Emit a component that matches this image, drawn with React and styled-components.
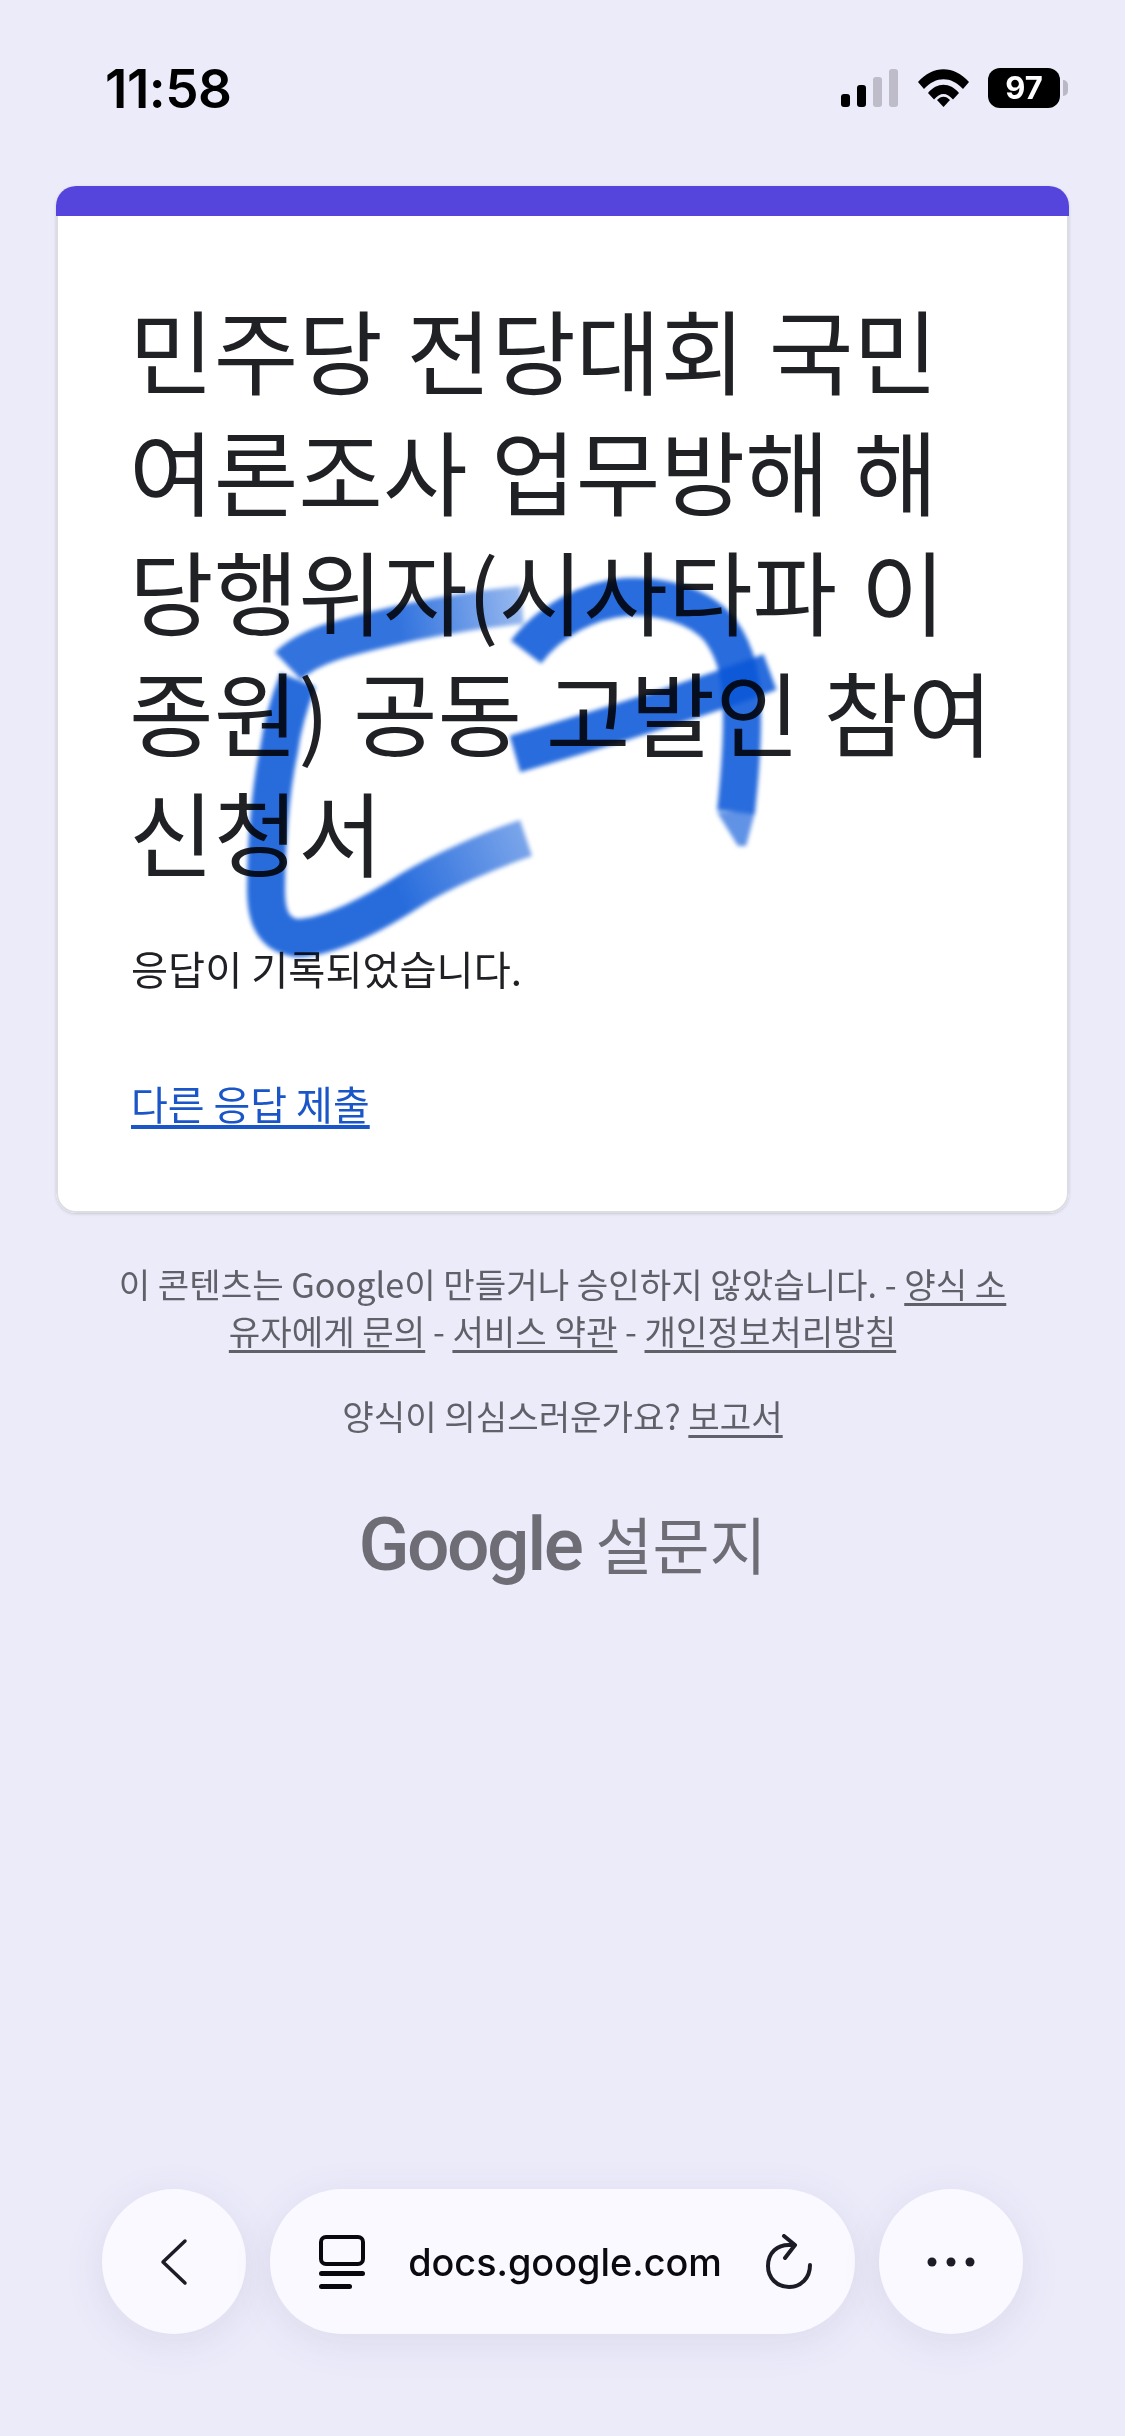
import React from "react";
import styled, { createGlobalStyle } from "styled-components";

const sans = `Inter, "Noto Sans CJK KR", sans-serif`;
const korean = `"Noto Sans CJK KR", Inter, sans-serif`;

const GlobalStyle = createGlobalStyle`
  html, body {
    margin: 0;
    padding: 0;
    background: #ecebfa;
  }
`;

const Page = styled.div`
  position: relative;
  width: 1125px;
  height: 2436px;
  overflow: hidden;
  display: flex;
  flex-direction: column;
  background: #ecebfa;
  font-family: ${korean};
`;

const StatusBar = styled.div`
  height: 186px;
  box-sizing: border-box;
  padding: 58px 65px 0 105px;
  display: flex;
  justify-content: space-between;
  align-items: flex-start;
`;

const Time = styled.div`
  font-family: ${sans};
  font-size: 53px;
  font-weight: 600;
  line-height: 62px;
  letter-spacing: -0.5px;
  color: #000;
`;

const StatusIcons = styled.div`
  display: flex;
  align-items: center;
  gap: 19px;
  margin-top: 10px;
`;

const Battery = styled.div`
  position: relative;
  width: 72px;
  height: 40px;
  border-radius: 12px;
  background: #000;
  color: #fff;
  font-family: ${sans};
  font-size: 31px;
  font-weight: 700;
  line-height: 40px;
  text-align: center;

  &::after {
    content: "";
    position: absolute;
    right: -8px;
    top: 12px;
    width: 5px;
    height: 16px;
    border-radius: 0 5px 5px 0;
    background: #b9b8c4;
  }
`;

const Card = styled.div`
  margin: 0 56px;
  width: 1013px;
  border-radius: 20px;
  background: #fff;
  box-shadow: 0 1px 3px rgba(60, 64, 67, 0.2);
  overflow: hidden;
`;

const CardAccent = styled.div`
  height: 30px;
  background: #5645dc;
`;

const CardBody = styled.div`
  height: 997px;
  box-sizing: border-box;
  padding: 72px 30px 0 71px;
  border: solid #dcdce2;
  border-width: 0 2px 2px;
  border-radius: 0 0 20px 20px;
`;

const Title = styled.h1`
  margin: 0;
  font-size: 92px;
  font-weight: 400;
  line-height: 120.5px;
  word-spacing: 3px;
  color: #202124;
`;

const Confirmation = styled.p`
  margin: 49px 0 0 2px;
  font-size: 40.3px;
  line-height: 56px;
  color: #202124;
`;

const AnotherLink = styled.a`
  display: inline-block;
  margin: 79px 0 0 2px;
  font-size: 40px;
  line-height: 56px;
  color: #1a56c8;
  text-decoration: underline;
  text-underline-offset: 5px;
`;

const Footer = styled.div`
  width: 900px;
  margin: 47px auto 0;
  font-size: 34.2px;
  line-height: 47px;
  text-align: center;
  color: #5f6068;
`;

const FooterLink = styled.a`
  color: #5f6068;
  text-decoration: underline;
  text-underline-offset: 5px;
`;

const Suspicious = styled.div`
  margin-top: 38px;
`;

const Brand = styled.div`
  margin-top: 59px;
  display: flex;
  justify-content: center;
  align-items: baseline;
  gap: 14px;
  color: #6e6d75;
`;

const BrandGoogle = styled.span`
  font-family: Roboto, ${sans};
  font-size: 75px;
  font-weight: 500;
  line-height: 90px;
  letter-spacing: -2.5px;
`;

const BrandProduct = styled.span`
  font-size: 62px;
  line-height: 90px;
`;

const BottomBar = styled.div`
  margin-top: auto;
  padding: 0 102px 102px;
  display: flex;
  justify-content: space-between;
  align-items: center;
`;

const RoundButton = styled.div`
  width: 144px;
  height: 145px;
  border-radius: 50%;
  background: #f9f9ff;
  box-shadow: 0 8px 40px rgba(80, 80, 120, 0.1);
  display: flex;
  align-items: center;
  justify-content: center;
`;

const UrlPill = styled.div`
  width: 585px;
  height: 145px;
  box-sizing: border-box;
  padding: 0 42px 0 49px;
  border-radius: 72px;
  background: #f9f9ff;
  box-shadow: 0 8px 40px rgba(80, 80, 120, 0.1);
  display: flex;
  align-items: center;
  justify-content: space-between;
`;

const UrlText = styled.span`
  font-family: ${sans};
  font-size: 37.8px;
  font-weight: 500;
  color: #0a0a10;
`;

const Scribble = styled.svg`
  position: absolute;
  left: 0;
  top: 0;
  pointer-events: none;
  mix-blend-mode: multiply;
  filter: blur(2px);
`;

const Stroke = styled.path`
  fill: none;
  stroke: ${(props) => props.$paint || "#0a58d8"};
  stroke-opacity: 0.88;
  stroke-width: 38px;
  stroke-linejoin: round;
`;

const StrokeTail = styled.path`
  fill: #0a58d8;
  fill-opacity: 0.65;
`;

const SignalIcon = () => (
  <svg width="58" height="38" viewBox="0 0 58 38">
    <rect x="0" y="25" width="9" height="13" rx="3" fill="#000" />
    <rect x="16" y="16" width="9" height="22" rx="3" fill="#000" />
    <rect x="32" y="8" width="9" height="30" rx="3" fill="#bdbcc8" />
    <rect x="48" y="0" width="9" height="38" rx="3" fill="#bdbcc8" />
  </svg>
);

const WifiIcon = () => (
  <svg width="51" height="38" viewBox="0 0 51 38">
    <path d="M0 13 C15 -4 36 -4 51 13 L45 20 C33 7 18 7 6 20 Z" fill="#000" />
    <path d="M10 24 C19 13 32 13 41 24 L35 30.5 C29 23 22 23 16 30.5 Z" fill="#000" />
    <path d="M25.5 38 L19 31 C23 26.5 28 26.5 32 31 Z" fill="#000" />
  </svg>
);

const BackIcon = () => (
  <svg width="30" height="48" viewBox="0 0 30 48">
    <path d="M26 3 L4 24 L26 45" fill="none" stroke="#1c1c26" strokeWidth="3.5" strokeLinecap="round" strokeLinejoin="round" />
  </svg>
);

const ReaderIcon = () => (
  <svg width="46" height="54" viewBox="0 0 46 54">
    <rect x="2" y="2" width="42" height="27" rx="5" fill="none" stroke="#08080e" strokeWidth="4" />
    <rect x="0" y="36" width="46" height="5" rx="2.5" fill="#08080e" />
    <rect x="0" y="49" width="33" height="5" rx="2.5" fill="#08080e" />
  </svg>
);

const ReloadIcon = () => (
  <svg width="48" height="56" viewBox="0 0 48 56">
    <path d="M26 11 C12 10 3 19 3 32 C3 44 12 53 24 53 C36 53 45 44 45 31" fill="none" stroke="#1c1c26" strokeWidth="4" strokeLinecap="round" />
    <path d="M19 2 L30 11 L20 24" fill="none" stroke="#1c1c26" strokeWidth="4" strokeLinecap="round" strokeLinejoin="round" />
  </svg>
);

const MoreIcon = () => (
  <svg width="48" height="10" viewBox="0 0 48 10">
    <circle cx="5" cy="5" r="4.5" fill="#1c1c26" />
    <circle cx="24" cy="5" r="4.5" fill="#1c1c26" />
    <circle cx="43" cy="5" r="4.5" fill="#1c1c26" />
  </svg>
);

export default function App() {
  return (
    <Page>
      <GlobalStyle />
      <StatusBar>
        <Time>11:58</Time>
        <StatusIcons>
          <SignalIcon />
          <WifiIcon />
          <Battery>97</Battery>
        </StatusIcons>
      </StatusBar>

      <Card>
        <CardAccent />
        <CardBody>
          <Title>
            민주당 전당대회 국민
            <br />
            여론조사 업무방해 해
            <br />
            당행위자(시사타파 이
            <br />
            종원) 공동 고발인 참여
            <br />
            신청서
          </Title>
          <Confirmation>응답이 기록되었습니다.</Confirmation>
          <AnotherLink>다른 응답 제출</AnotherLink>
        </CardBody>
      </Card>

      <Footer>
        이 콘텐츠는 Google이 만들거나 승인하지 않았습니다. - <FooterLink>양식 소유자에게 문의</FooterLink> -{" "}
        <FooterLink>서비스 약관</FooterLink> - <FooterLink>개인정보처리방침</FooterLink>
        <Suspicious>
          양식이 의심스러운가요? <FooterLink>보고서</FooterLink>
        </Suspicious>
        <Brand>
          <BrandGoogle>Google</BrandGoogle>
          <BrandProduct>설문지</BrandProduct>
        </Brand>
      </Footer>

      <BottomBar>
        <RoundButton>
          <BackIcon />
        </RoundButton>
        <UrlPill>
          <ReaderIcon />
          <UrlText>docs.google.com</UrlText>
          <ReloadIcon />
        </UrlPill>
        <RoundButton>
          <MoreIcon />
        </RoundButton>
      </BottomBar>

      <Scribble width="1125" height="1000" viewBox="0 0 1125 1000">
        <defs>
          <linearGradient id="lowerFade" gradientUnits="userSpaceOnUse" x1="530" y1="836" x2="400" y2="896">
            <stop offset="0" stopColor="#0a58d8" stopOpacity="0.6" />
            <stop offset="1" stopColor="#0a58d8" />
          </linearGradient>
          <linearGradient id="upperFade" gradientUnits="userSpaceOnUse" x1="530" y1="604" x2="400" y2="624">
            <stop offset="0" stopColor="#0a58d8" stopOpacity="0.45" />
            <stop offset="1" stopColor="#0a58d8" stopOpacity="0.95" />
          </linearGradient>
        </defs>
        <Stroke $paint="url(#lowerFade)" d="M526 838 C 490 850 440 872 411 890 C 380 910 330 938 296 938 C 272 934 266 915 266 890 C 266 850 270 790 279 750 C 283 720 290 700 298 680" />
        <Stroke $paint="url(#upperFade)" d="M288 666 C 310 645 340 638 411 622 C 450 614 490 608 522 605" />
        <Stroke d="M526 652 C 550 620 590 600 625 597 C 660 595 700 605 720 630 C 738 655 742 680 742 720 C 742 760 738 790 736 812" />
        <StrokeTail d="M717 812 L755 812 L746 846 L738 846 Z" />
        <Stroke d="M515 754 C 580 735 680 705 770 672" />
      </Scribble>
    </Page>
  );
}
